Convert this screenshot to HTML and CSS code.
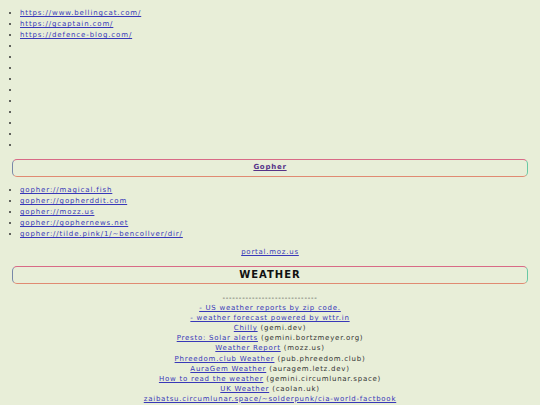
FILE: index.html
```html
<!DOCTYPE html>
<html>
<head>
<meta charset="utf-8">
<link rel="stylesheet" href="styles.css">
</head>
<body>
<div class="page">
  <ul class="links">
    <li><a href="#">https://www.bellingcat.com/</a></li>
    <li><a href="#">https://gcaptain.com/</a></li>
    <li><a href="#">https://defence-blog.com/</a></li>
    <li></li><li></li><li></li><li></li><li></li>
    <li></li><li></li><li></li><li></li><li></li>
  </ul>
  <h2 class="box"><a class="visited" href="#">Gopher</a></h2>
  <ul class="links">
    <li><a href="#">gopher://magical.fish</a></li>
    <li><a href="#">gopher://gopherddit.com</a></li>
    <li><a href="#">gopher://mozz.us</a></li>
    <li><a href="#">gopher://gophernews.net</a></li>
    <li><a href="#">gopher://tilde.pink/1/~bencollver/dir/</a></li>
  </ul>
  <p class="portal"><a href="#">portal.moz.us</a></p>
  <h2 class="box title">WEATHER</h2>
  <div class="centered">
    <div class="line">-----------------------------</div>
    <div class="line"><a href="#">- US weather reports by zip code.</a></div>
    <div class="line"><a href="#">- weather forecast powered by wttr.in</a></div>
    <div class="line"><a href="#">Chilly</a> (gemi.dev)</div>
    <div class="line"><a href="#">Presto: Solar alerts</a> (gemini.bortzmeyer.org)</div>
    <div class="line"><a href="#">Weather Report</a> (mozz.us)</div>
    <div class="line"><a href="#">Phreedom.club Weather</a> (pub.phreedom.club)</div>
    <div class="line"><a href="#">AuraGem Weather</a> (auragem.letz.dev)</div>
    <div class="line"><a href="#">How to read the weather</a> (gemini.circumlunar.space)</div>
    <div class="line"><a href="#">UK Weather</a> (caolan.uk)</div>
    <div class="line"><a href="#">zaibatsu.circumlunar.space/~solderpunk/cia-world-factbook</a></div>
  </div>
</div>
</body>
</html>
```
FILE: styles.css
```css
html, body {
  margin: 0;
  padding: 0;
  background: #e8eed8;
}
body {
  font-family: "DejaVu Sans", Verdana, sans-serif;
  font-size: 7px;
  letter-spacing: 0.75px;
  color: #333333;
}
.page {
  padding: 8px 12px 0 12px;
}
a {
  color: #3838b8;
  text-decoration: underline;
}
a.visited {
  color: #553388;
}
.links {
  margin: 0;
  padding: 0 0 0 8px;
  list-style: disc;
  list-style-position: outside;
  letter-spacing: 0.87px;
}
.links li {
  height: 11px;
  line-height: 11px;
}
.box {
  margin: 8px 0 8px 0;
  box-sizing: border-box;
  height: 18px;
  line-height: 15px;
  text-align: center;
  font-size: 7px;
  font-weight: bold;
  border: 1.5px solid;
  border-color: #d86a86 #68c8a4 #e08a72 #7888a8;
  border-radius: 5px;
}
.portal {
  margin: 7px 0 0 0;
  text-align: center;
  line-height: 11px;
}
.title {
  font-size: 10px;
  letter-spacing: 1px;
  color: #111111;
  margin-top: 8px;
}
.centered {
  text-align: center;
  margin-top: 9px;
}
.line {
  line-height: 10.1px;
  white-space: nowrap;
}
```
